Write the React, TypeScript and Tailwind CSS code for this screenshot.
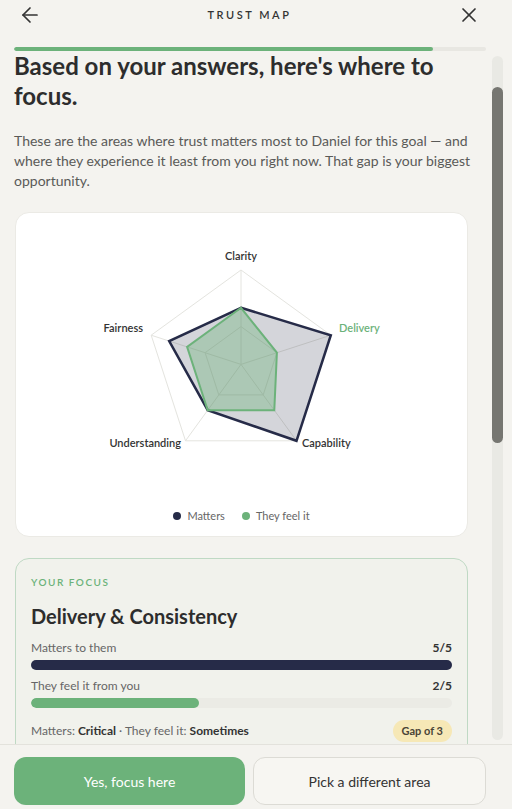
import React from "react";

const NAVY = "#262b48";
const GREEN = "#6cb27a";

const CX = 210;
const CY = 136.4;
const R = 94.4;
const dirs = [0, 1, 2, 3, 4].map((i) => {
  const a = ((-90 + 72 * i) * Math.PI) / 180;
  return [Math.cos(a), Math.sin(a)];
});
const pts = (vals: number[]) =>
  vals
    .map((v, i) => {
      const r = (v / 5) * R;
      return `${(CX + dirs[i][0] * r).toFixed(1)},${(CY + dirs[i][1] * r).toFixed(1)}`;
    })
    .join(" ");
const ring = (f: number) => pts([5, 5, 5, 5, 5].map((v) => v * f));

function Radar() {
  return (
    <svg width="421" height="260" viewBox="0 0 421 260" className="block">
      {[0.4, 1].map((f) => (
        <polygon key={f} points={ring(f)} fill="none" stroke="#e4e4df" strokeWidth="1" />
      ))}
      {dirs.map((d, i) => (
        <line
          key={i}
          x1={CX}
          y1={CY}
          x2={CX + d[0] * R}
          y2={CY + d[1] * R}
          stroke="#e4e4df"
          strokeWidth="1"
        />
      ))}
      <polygon
        points={pts([3, 5, 5, 3, 4])}
        fill={NAVY}
        fillOpacity="0.2"
        stroke={NAVY}
        strokeWidth="2.5"
        strokeLinejoin="miter"
      />
      <polygon
        points={pts([3, 2, 3, 3, 3])}
        fill={GREEN}
        fillOpacity="0.38"
        stroke={GREEN}
        strokeWidth="2"
      />
      <g fontFamily="Lato, sans-serif" fontSize="11" fontWeight="600" fill="#333">
        <text x="210" y="29" textAnchor="middle" dominantBaseline="middle">
          Clarity
        </text>
        <text x="112" y="101" textAnchor="end" dominantBaseline="middle">
          Fairness
        </text>
        <text x="308" y="101" textAnchor="start" dominantBaseline="middle" fill={GREEN}>
          Delivery
        </text>
        <text x="150" y="216" textAnchor="end" dominantBaseline="middle">
          Understanding
        </text>
        <text x="271" y="216" textAnchor="start" dominantBaseline="middle">
          Capability
        </text>
      </g>
    </svg>
  );
}

function ArrowLeft() {
  return (
    <svg width="24" height="24" viewBox="0 0 24 24" fill="none" stroke="#333" strokeWidth="1.7" strokeLinecap="round" strokeLinejoin="round">
      <path d="M19 12H5" />
      <path d="M12 19l-7-7 7-7" />
    </svg>
  );
}

function XIcon() {
  return (
    <svg width="24" height="24" viewBox="0 0 24 24" fill="none" stroke="#333" strokeWidth="1.7" strokeLinecap="round" strokeLinejoin="round">
      <path d="M18 6 6 18" />
      <path d="M6 6l12 12" />
    </svg>
  );
}

export default function App() {
  return (
    <div className="h-[809px] w-[512px] bg-[#f4f3ef] flex flex-col overflow-hidden font-[family-name:Lato,sans-serif] text-[#2f2f2f]">
      {/* header */}
      <div className="h-[30px] flex items-center justify-between pl-[18px] pr-[31px] shrink-0">
        <ArrowLeft />
        <div className="text-[11px] font-semibold tracking-[0.23em] text-[#333]">TRUST MAP</div>
        <XIcon />
      </div>
      {/* progress */}
      <div className="pt-[17px] pl-[14px] pr-[26px] shrink-0">
        <div className="h-[4px] w-full bg-[#e8e7e2] rounded-full overflow-hidden">
          <div className="h-full w-[88.8%] bg-[#6cb27a] rounded-full" />
        </div>
      </div>

      {/* scroll area */}
      <div className="flex-1 min-h-0 flex overflow-hidden">
        <div className="w-[454px] ml-[14px] shrink-0">
          <h1 className="text-[24px] leading-[30px] font-bold text-[#2d2d2d]">
            Based on your answers, here's where to focus.
          </h1>
          <p className="mt-5 w-[466px] text-[14px] leading-[20px] text-[#5a5a58]">
            These are the areas where trust matters most to Daniel for this goal — and where they experience it least from you right now. That gap is your biggest opportunity.
          </p>

          <div className="mt-[21px] ml-px w-[453px] bg-white rounded-[14px] border border-[#ebeae5] pt-[15px] pb-3 px-[15px]">
            <Radar />
            <div className="mt-5 h-4 flex items-center justify-center gap-[17px] text-[11px] text-[#666]">
              <div className="flex items-center gap-[6px]">
                <span className="w-2 h-2 rounded-full bg-[#262b48]" />
                <span>Matters</span>
              </div>
              <div className="flex items-center gap-[6px]">
                <span className="w-2 h-2 rounded-full bg-[#6cb27a]" />
                <span>They feel it</span>
              </div>
            </div>
          </div>

          <div className="mt-[21px] ml-px w-[453px] rounded-[14px] border border-[#bfd9c4] bg-[#f1f2ec] px-[15px] pt-[15px] pb-4">
            <div className="text-[10px] leading-4 font-semibold tracking-[0.15em] text-[#6cb27a]">YOUR FOCUS</div>
            <div className="mt-3 text-[20px] leading-[28px] font-bold text-[#2d2d2d]">Delivery &amp; Consistency</div>

            <div className="mt-[10px] flex justify-between text-[12px] leading-4">
              <span className="text-[#666]">Matters to them</span>
              <span className="font-bold text-[#333]">5/5</span>
            </div>
            <div className="mt-1 h-[10px] rounded-full bg-[#262b48]" />

            <div className="mt-2 flex justify-between text-[12px] leading-4">
              <span className="text-[#666]">They feel it from you</span>
              <span className="font-bold text-[#333]">2/5</span>
            </div>
            <div className="mt-1 h-[10px] rounded-full bg-[#ebebe5] overflow-hidden">
              <div className="h-full w-[40%] bg-[#6cb27a] rounded-full" />
            </div>

            <div className="mt-3 flex items-center justify-between">
              <span className="text-[12px] text-[#666]">
                Matters: <span className="font-bold text-[#333]">Critical</span> · They feel it:{" "}
                <span className="font-bold text-[#333]">Sometimes</span>
              </span>
              <span className="h-[22px] px-[9px] flex items-center rounded-full bg-[#f6e8b6] text-[11px] font-bold text-[#4a4436]">
                Gap of 3
              </span>
            </div>
          </div>
        </div>

        {/* scrollbar */}
        <div className="ml-[24px] w-[11px] shrink-0 pt-[5px] pb-[4px] flex flex-col">
          <div className="flex-1 rounded-full bg-[#e9e9e4] pt-[31px]">
            <div className="h-[356px] rounded-full bg-[#767671]" />
          </div>
        </div>
      </div>

      {/* footer */}
      <div className="shrink-0 border-t border-[#e3e2dc] pt-3 pb-1 pl-[14px] pr-[26px] flex gap-2">
        <button className="flex-1 h-12 rounded-xl bg-[#6cb27a] text-white text-[14px]">Yes, focus here</button>
        <button className="flex-1 h-12 rounded-xl border border-[#dcdbd5] bg-[#f7f6f2] text-[#333] text-[14px]">
          Pick a different area
        </button>
      </div>
    </div>
  );
}
